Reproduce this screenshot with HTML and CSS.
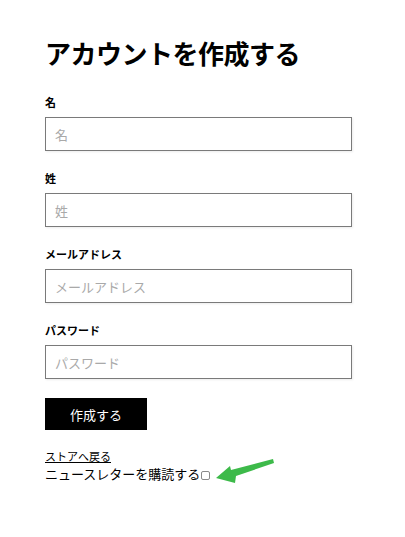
FILE: index.html
```html
<!DOCTYPE html>
<html lang="ja">
<head>
<meta charset="utf-8">
<link rel="stylesheet" href="styles.css">
</head>
<body>
<main class="page">
  <h1 class="title">アカウントを作成する</h1>
  <form class="form">
    <div class="field">
      <label class="label">名</label>
      <input class="input" type="text" placeholder="名">
    </div>
    <div class="field">
      <label class="label">姓</label>
      <input class="input" type="text" placeholder="姓">
    </div>
    <div class="field">
      <label class="label">メールアドレス</label>
      <input class="input" type="text" placeholder="メールアドレス">
    </div>
    <div class="field">
      <label class="label">パスワード</label>
      <input class="input" type="password" placeholder="パスワード">
    </div>
    <button class="submit" type="button">作成する</button>
  </form>
  <div class="links">
    <a class="back" href="#">ストアへ戻る</a>
    <label class="newsletter">ニュースレターを購読する<span class="box"></span></label>
  </div>
  <svg class="arrow" width="405" height="537" viewBox="0 0 405 537">
    <polygon points="216,478 230,466 231,470 273,459 274,463 236,476 235,483" fill="#3dba4a"/>
  </svg>
</main>
</body>
</html>
```
FILE: styles.css
```css
* { box-sizing: border-box; }
html, body { margin: 0; padding: 0; background: #fff; }
body {
  font-family: "Noto Sans CJK JP", "Noto Sans", sans-serif;
  color: #000;
}
.page {
  position: relative;
  width: 405px;
  height: 537px;
  padding: 35px 0 0 45px;
}
.title {
  margin: 0;
  font-size: 26px;
  line-height: 36px;
  font-weight: 700;
  letter-spacing: -0.5px;
}
.form {
  display: flex;
  flex-direction: column;
  margin-top: 23px;
}
.field {
  display: flex;
  flex-direction: column;
  gap: 7px;
  margin-bottom: 19px;
}
.label {
  font-size: 11px;
  line-height: 16px;
  font-weight: 700;
}
.input {
  width: 307px;
  height: 34px;
  margin: 0;
  padding: 0 9px;
  border: 1px solid #7a7a7a;
  border-radius: 0;
  box-shadow: 1px 1px 2px rgba(0,0,0,0.08);
  font-family: inherit;
  font-size: 13px;
  outline: none;
}
.input::placeholder { color: #a9a9a9; }
.submit {
  width: 102px;
  height: 32px;
  margin: 0;
  padding: 0;
  border: none;
  background: #000;
  color: #fff;
  font-family: inherit;
  font-size: 13px;
}
.links {
  display: flex;
  flex-direction: column;
  margin-top: 18px;
}
.back {
  color: #000;
  font-size: 11px;
  line-height: 16px;
  text-decoration: underline;
  align-self: flex-start;
}
.newsletter {
  display: flex;
  align-items: center;
  font-size: 13px;
  line-height: 19px;
}
.box {
  display: inline-block;
  width: 9px;
  height: 9px;
  margin-left: 1px;
  margin-top: 3px;
  border: 1px solid #8a8a8a;
  border-radius: 2px;
  background: #fff;
}
.arrow {
  position: absolute;
  left: 0;
  top: 0;
  pointer-events: none;
}
```
